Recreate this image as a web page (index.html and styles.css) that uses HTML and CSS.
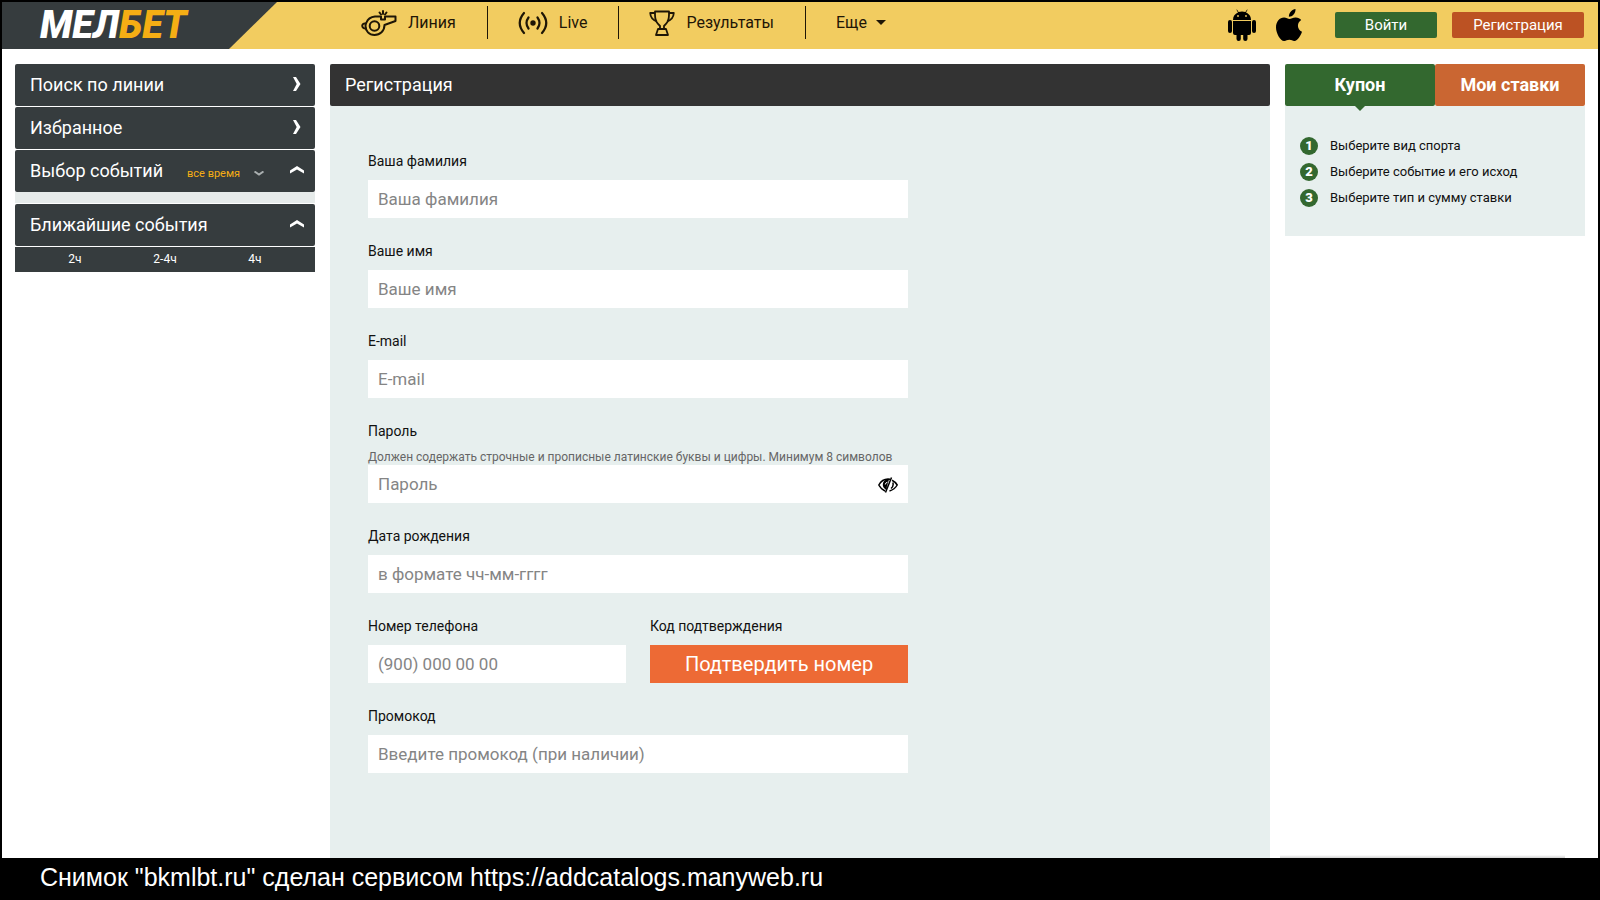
FILE: index.html
```html
<!DOCTYPE html>
<html lang="ru">
<head>
<meta charset="utf-8">
<title>Регистрация — Мелбет</title>
<link rel="stylesheet" href="styles.css">
</head>
<body>
<div class="page">
  <header class="header">
    <a class="logo" href="#"><span class="logo-light">МЕЛ</span><span class="logo-gold">БЕТ</span></a>
    <nav class="nav">
      <a class="nav-item" href="#">
        <svg class="icon-whistle" viewBox="0 0 36 26" fill="none" stroke="#1f1606" stroke-width="2" stroke-linejoin="round" stroke-linecap="round">
          <circle cx="13.500" cy="16" r="4.800"/>
          <path d="M5.500 12.500C7 8.500 10 7 14 6.500L20 6.500L20 9.500L24 9.500L24 6.500L34.500 6.500L34.500 11L23.500 15C23.500 21 19 25 13.500 25C8 25 4.500 21 4.500 16C4.500 14.500 4.900 13.400 5.500 12.500Z"/>
          <path d="M4.800 13.500C0 12.500 0 19 5 18.500M18.500 2.500L20 4.500M22 1V4M25.500 2.500L24 4.500"/>
        </svg>
        <span>Линия</span>
      </a>
      <a class="nav-item" href="#">
        <svg class="icon-live" viewBox="0 0 30 24" fill="none" stroke="#1f1606" stroke-width="2.200" stroke-linecap="round">
          <circle cx="15" cy="12" r="2.700" fill="#1f1606" stroke="none"/>
          <path d="M10.500 6.500Q6.500 12 10.500 17.500M19.500 6.500Q23.500 12 19.500 17.500M6 2Q-2.500 12 6 22M24 2Q32.500 12 24 22"/>
        </svg>
        <span>Live</span>
      </a>
      <a class="nav-item" href="#">
        <svg class="icon-cup" viewBox="0 0 26 26" fill="none" stroke="#1f1606" stroke-width="1.800" stroke-linejoin="round">
          <path d="M6 1.500H20V5C20 11 18 13 15 16V19H11V16C8 13 6 11 6 5Z"/>
          <path d="M6 3H1.200C1.500 7.500 3.500 10 8 11.500M20 3H24.800C24.500 7.500 22.500 10 18 11.500M9 19H17L19 25H7Z"/>
        </svg>
        <span>Результаты</span>
      </a>
      <button class="nav-item nav-more" type="button">Еще <span class="caret"></span></button>
    </nav>
    <div class="actions">
      <a class="app" href="#" aria-label="Android">
        <svg class="icon-android" viewBox="0 0 28 32">
          <path d="M5 11C5 7 7 5 10 3.500L8.400.8L8.900.4L10.600 3.100Q14 1.900 17.400 3.100L19.100.4L19.600.8L18 3.500C21 5 23 7 23 11ZM5 12H23V24Q23 26 21 26H19.500V30Q19.500 32 17.300 32Q15.200 32 15.200 30V26H12.800V30Q12.800 32 10.700 32Q8.500 32 8.500 30V26H7Q5 26 5 24Z"/>
          <rect x="0" y="11" width="4" height="13" rx="2"/><rect x="24" y="11" width="4" height="13" rx="2"/>
          <circle cx="10" cy="7" r=".9" fill="#f2cc60"/><circle cx="18" cy="7" r=".9" fill="#f2cc60"/>
        </svg>
      </a>
      <a class="app" href="#" aria-label="iOS">
        <svg class="icon-apple" viewBox="0 0 26 32">
          <path d="M19.500 0C19.700 4 16.800 7.500 12.900 7.700C12.600 4 16 .5 19.500 0ZM25.200 11.100C20.500 14 21 20.500 26 22.700C24.800 26.500 21.500 31.700 18.500 31.900C16.500 32 15.800 30.700 13.400 30.700C11 30.700 10.200 31.900 8.300 32C4.500 32.100 0 24.500 0 18.500C0 12.500 3.700 8.500 8 8.500C10.300 8.500 12 10 13.500 10C15 10 17 8.300 19.800 8.400C22 8.500 24 9.300 25.200 11.100Z"/>
        </svg>
      </a>
      <button class="btn btn-login" type="button">Войти</button>
      <button class="btn btn-join" type="button">Регистрация</button>
    </div>
  </header>

  <div class="columns">
    <aside class="side">
      <button class="bar" type="button">Поиск по линии <svg class="chev-right" viewBox="0 0 8 14"><path d="M0 0H3L7.500 7L3 14H0L3.700 7Z"/></svg></button>
      <button class="bar" type="button">Избранное <svg class="chev-right" viewBox="0 0 8 14"><path d="M0 0H3L7.500 7L3 14H0L3.700 7Z"/></svg></button>
      <button class="bar" type="button">Выбор событий
        <span class="period">все время <svg class="chev-down" viewBox="0 0 10 5"><path d="M.5.500L5 3.500L9.500.500"/></svg></span>
        <svg class="chev-up" viewBox="0 0 14 8"><path d="M0 7V4.500L7 0L14 4.500V7.500L7 3.500L0 7.500Z"/></svg></button>
      <div class="strip"></div>
      <button class="bar" type="button">Ближайшие события <svg class="chev-up" viewBox="0 0 14 8"><path d="M0 7V4.500L7 0L14 4.500V7.500L7 3.500L0 7.500Z"/></svg></button>
      <div class="hours"><a href="#">2ч</a><a href="#">2-4ч</a><a href="#">4ч</a></div>
    </aside>

    <main class="main">
      <h1 class="title">Регистрация</h1>
      <form class="form">
        <div class="field"><label for="surname">Ваша фамилия</label><input id="surname" type="text" placeholder="Ваша фамилия"></div>
        <div class="field"><label for="name">Ваше имя</label><input id="name" type="text" placeholder="Ваше имя"></div>
        <div class="field"><label for="email">E-mail</label><input id="email" type="email" placeholder="E-mail"></div>
        <div class="field">
          <label for="password">Пароль</label>
          <div>
            <p class="hint">Должен содержать строчные и прописные латинские буквы и цифры. Минимум 8 символов</p>
            <div class="secret">
              <input id="password" type="password" placeholder="Пароль">
              <button class="eye" type="button" aria-label="Показать пароль">
                <svg class="icon-eye" viewBox="0 0 20 16" fill="none" stroke="#000" stroke-width="1.500">
                  <path d="M7 14C4.500 13 2.500 11 .8 8C3 4 6 2 10 2L12 2.200M14 3.200C16.200 4.200 17.900 5.900 19.200 8C17.500 11 15 13 11.500 14M14.800 5.500Q16 9 13 11.500"/>
                  <path d="M13.500.5L7.500 15.500M10 3.200C5.500 3 4 8.500 7.500 11.500Z" fill="#000"/>
                  <path d="M9.500 5.200Q7.500 5.500 7.300 7.500" stroke="#fff" stroke-width="1"/>
                </svg>
              </button>
            </div>
          </div>
        </div>
        <div class="field"><label for="birth">Дата рождения</label><input id="birth" type="text" placeholder="в формате чч-мм-гггг"></div>
        <div class="pair">
          <div class="field"><label for="phone">Номер телефона</label><input id="phone" type="tel" placeholder="(900) 000 00 00"></div>
          <div class="field"><label for="confirm">Код подтверждения</label><button id="confirm" class="confirm" type="button">Подтвердить номер</button></div>
        </div>
        <div class="field"><label for="promo">Промокод</label><input id="promo" type="text" placeholder="Введите промокод (при наличии)"></div>
      </form>
    </main>

    <aside class="coupon">
      <div class="tabs">
        <button class="tab tab-active" type="button">Купон</button>
        <button class="tab" type="button">Мои ставки</button>
      </div>
      <ol class="steps">
        <li><span class="num">1</span>Выберите вид спорта</li>
        <li><span class="num">2</span>Выберите событие и его исход</li>
        <li><span class="num">3</span>Выберите тип и сумму ставки</li>
      </ol>
      <div class="edge"></div>
    </aside>
  </div>
</div>
<footer class="caption">Снимок "bkmlbt.ru" сделан сервисом https://addcatalogs.manyweb.ru</footer>
</body>
</html>
```
FILE: styles.css
```css
*, *::before, *::after { box-sizing: border-box; }
body {
  margin: 0;
  min-height: 100vh;
  display: flex;
  flex-direction: column;
  background: #000;
  font-family: Roboto, "Liberation Sans", sans-serif;
  color: #111;
}
button, input { font: inherit; border: 0; border-radius: 0; }
button { cursor: pointer; }
a { color: inherit; text-decoration: none; }
svg { display: block; flex: none; }

.page {
  flex: 1;
  display: flex;
  flex-direction: column;
  margin: 2px 2px 0;
  background: #fff;
}

.header {
  height: 47px;
  display: flex;
  background: #f2cc60;
}
.logo {
  width: 275px;
  padding-left: 38px;
  background: #363c3e;
  clip-path: polygon(0 0, 100% 0, 227px 100%, 0 100%);
  font-size: 38px;
  line-height: 46px;
  font-weight: 900;
  font-style: italic;
}
.logo-light { color: #fff; }
.logo-gold { color: #f5ae14; }

.nav { display: flex; margin-left: 54px; padding-top: 4px; }
.nav-item {
  height: 33px;
  display: flex;
  align-items: center;
  gap: 11px;
  padding: 0 31px 0 30px;
  border-left: 1px solid #1f1606;
  font-size: 16px;
  color: #1f1606;
  background: none;
}
.nav-item:first-child { border-left: 0; }
.nav-more { gap: 9px; }
.icon-whistle { width: 36px; height: 26px; }
.icon-live { width: 30px; height: 24px; }
.icon-cup { width: 26px; height: 26px; }
.caret {
  border: 5px solid transparent;
  border-top-color: #1f1606;
  border-bottom: 0;
}

.actions {
  display: flex;
  align-items: center;
  margin-left: auto;
  padding: 0 14px 2px 0;
}
.icon-android { width: 28px; height: 32px; }
.icon-apple { width: 26px; height: 32px; }
.app { margin-right: 20px; }
.app + .app { margin-right: 33px; }
.btn {
  height: 26px;
  padding: 0;
  border-radius: 2px;
  font-size: 15px;
  color: #fff;
}
.btn-login { width: 102px; background: #33682f; }
.btn-join { width: 132px; margin-left: 15px; background: #bc5223; }

.columns {
  flex: 1;
  display: grid;
  grid-template-columns: 300px 1fr 300px;
  gap: 15px;
  padding: 15px 13px 0;
}

.side { display: flex; flex-direction: column; gap: 1px; }
.bar {
  height: 42px;
  display: flex;
  align-items: center;
  padding: 0 15px 2px;
  border-radius: 2px;
  background: #363c3e;
  color: #fff;
  font-size: 18px;
}
.bar > svg { margin-left: auto; fill: #fff; }
.bar > .chev-right { width: 8px; height: 14px; margin-right: -1px; }
.bar > .chev-up { width: 14px; height: 8px; margin-right: -4px; }
.period {
  display: flex;
  align-items: center;
  gap: 14px;
  margin-left: 24px;
  padding-top: 6px;
  font-size: 11px;
  color: #f5ae14;
}
.chev-down { width: 10px; height: 5px; fill: none; stroke: #aaafb0; stroke-width: 2; }
.strip { height: 11px; margin-top: -1px; background: #e6ebea; }
.hours {
  height: 25px;
  display: grid;
  grid-template-columns: repeat(3, 1fr);
  align-items: center;
  padding: 0 15px 2px;
  background: #363c3e;
  color: #fff;
  font-size: 12px;
  text-align: center;
}

.main { background: #e7efee; }
.title {
  margin: 0;
  padding-left: 15px;
  border-radius: 2px;
  background: #333;
  color: #fff;
  font-size: 18px;
  font-weight: 400;
  line-height: 42px;
}
.form {
  max-width: 578px;
  display: grid;
  gap: 23px;
  padding: 45px 0 45px 38px;
}
.field { display: grid; gap: 9px; font-size: 14px; line-height: 20px; }
.field input {
  width: 100%;
  height: 38px;
  padding: 0 10px;
  background: #fff;
  font-size: 17px;
}
.field input::placeholder { color: #858585; opacity: 1; }
.hint { margin: 0; font-size: 12px; line-height: 15px; color: #666; }
.secret { position: relative; display: grid; }
.eye { position: absolute; right: 10px; top: 12px; padding: 0; background: none; }
.icon-eye { width: 20px; height: 16px; }
.pair { display: grid; grid-template-columns: 1fr 1fr; gap: 24px; }
.confirm { height: 38px; padding: 0; background: #ed6a35; color: #fff; font-size: 20px; }

.coupon { display: flex; flex-direction: column; }
.tabs { display: grid; grid-template-columns: 1fr 1fr; }
.tab {
  position: relative;
  height: 42px;
  padding: 0 0 2px;
  border-radius: 2px;
  background: #ca6632;
  color: #fff;
  font-size: 18px;
  font-weight: 700;
}
.tab-active { background: #33682f; }
.tab-active::after {
  content: "";
  position: absolute;
  top: 100%;
  left: 50%;
  margin-left: -5px;
  border: 5px solid transparent;
  border-top-color: #33682f;
  border-bottom: 0;
}
.steps {
  display: grid;
  gap: 8px;
  margin: 0;
  padding: 31px 15px 29px;
  background: #e7efee;
  list-style: none;
  font-size: 13px;
  line-height: 18px;
}
.steps li { display: flex; gap: 12px; }
.num {
  width: 18px;
  border-radius: 50%;
  background: #33682f;
  color: #fff;
  font-weight: 900;
  text-align: center;
}
.edge { height: 3px; margin: auto 20px 0 -5px; background: linear-gradient(#fff, #d0d0d0); }

.caption {
  padding: 0 0 3px 40px;
  background: #000;
  color: #fff;
  font-family: "Liberation Sans", Arial, sans-serif;
  font-size: 25px;
  line-height: 39px;
}
```
